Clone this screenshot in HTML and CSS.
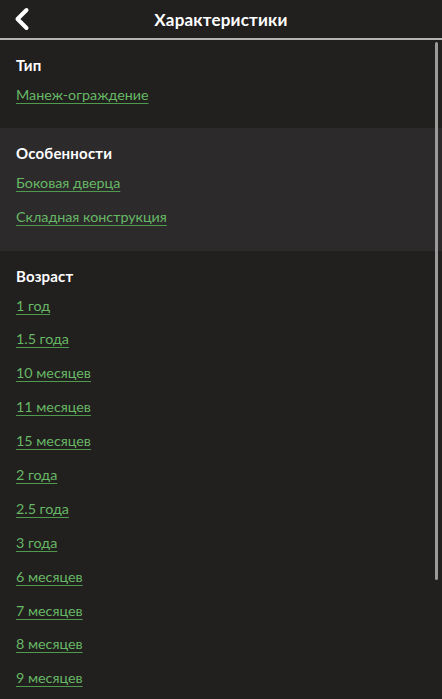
FILE: index.html
```html
<!DOCTYPE html>
<html lang="ru">
<head>
<meta charset="utf-8">
<title>Характеристики</title>
<link rel="stylesheet" href="styles.css">
</head>
<body>
<header class="topbar">
  <a class="back" href="#" aria-label="Назад">
    <svg width="20" height="24" viewBox="0 0 20 24"><path d="M13.5 3 L4.5 12 L13.5 21" fill="none" stroke="#fff" stroke-width="4" stroke-linecap="round" stroke-linejoin="round"/></svg>
  </a>
  <h1 class="title">Характеристики</h1>
  <span class="spacer"></span>
</header>
<main class="content">
  <section class="group">
    <h2 class="group-title">Тип</h2>
    <a class="val" href="#">Манеж-ограждение</a>
  </section>
  <section class="group alt">
    <h2 class="group-title">Особенности</h2>
    <a class="val" href="#">Боковая дверца</a>
    <a class="val" href="#">Складная конструкция</a>
  </section>
  <section class="group">
    <h2 class="group-title">Возраст</h2>
    <a class="val" href="#">1 год</a>
    <a class="val" href="#">1.5 года</a>
    <a class="val" href="#">10 месяцев</a>
    <a class="val" href="#">11 месяцев</a>
    <a class="val" href="#">15 месяцев</a>
    <a class="val" href="#">2 года</a>
    <a class="val" href="#">2.5 года</a>
    <a class="val" href="#">3 года</a>
    <a class="val" href="#">6 месяцев</a>
    <a class="val" href="#">7 месяцев</a>
    <a class="val" href="#">8 месяцев</a>
    <a class="val" href="#">9 месяцев</a>
  </section>
</main>
<div class="scrollbar"></div>
</body>
</html>
```

FILE: styles.css
```css
html, body {
  margin: 0;
  padding: 0;
  background: #221f1f;
  height: 100%;
  overflow: hidden;
}
body {
  font-family: "Lato", "Noto Sans", sans-serif;
  color: #fff;
}
.topbar {
  height: 38px;
  display: grid;
  grid-template-columns: 44px 1fr 44px;
  align-items: center;
  border-bottom: 2px solid #b4b4b4;
  background: #221f1f;
}
.back {
  display: flex;
  align-items: center;
  justify-content: center;
  padding-left: 2px;
  height: 38px;
}
.back svg { display: block; }
.title {
  margin: 0;
  text-align: center;
  font-size: 17px;
  font-weight: 700;
  letter-spacing: 0.2px;
}
.content {
  display: flex;
  flex-direction: column;
}
.group {
  display: flex;
  flex-direction: column;
  align-items: flex-start;
  gap: 13.9px;
  padding: 15px 16px 23px;
}
.group.alt {
  background: #2c2a2b;
  padding-bottom: 24px;
}
.group-title {
  margin: 0 0 -4px;
  font-size: 15px;
  line-height: 20px;
  font-weight: 700;
  color: #fff;
  letter-spacing: 0.2px;
}
.val {
  font-size: 14.3px;
  line-height: 20px;
  color: #67b865;
  text-decoration: underline;
  text-decoration-thickness: 1px;
  text-underline-offset: 3px;
  text-decoration-color: #4f9a4e;
}
.scrollbar {
  position: fixed;
  top: 42px;
  right: 4px;
  width: 3px;
  height: 538px;
  border-radius: 2px;
  background: #9a9a9a;
}
```
